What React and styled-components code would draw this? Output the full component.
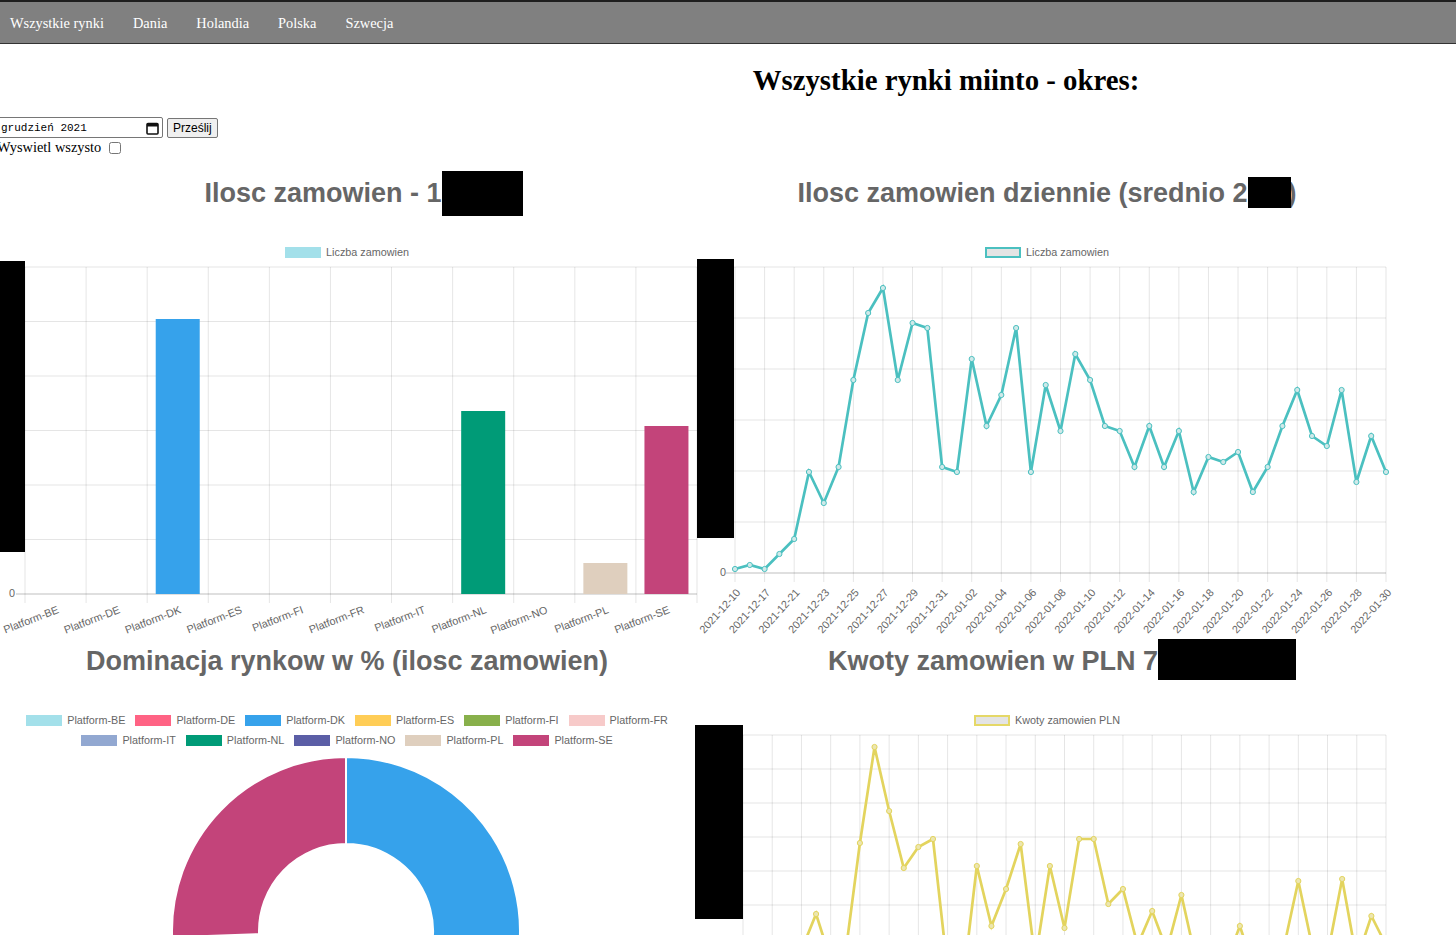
import React from 'react';
import styled, { createGlobalStyle } from 'styled-components';

const GlobalStyle = createGlobalStyle`
  html, body {
    margin: 0;
    padding: 0;
    background: #fff;
    overflow: hidden;
  }
  body {
    font-family: "Liberation Serif", "Times New Roman", serif;
    font-size: 14.4px;
    color: #000;
  }
`;

const platforms = [
    {name: 'Platform-BE', color: '#a3e0ea', value: 0},
    {name: 'Platform-DE', color: '#ff6384', value: 0},
    {name: 'Platform-DK', color: '#36a2eb', value: 275},
    {name: 'Platform-ES', color: '#ffcd56', value: 0},
    {name: 'Platform-FI', color: '#88b04b', value: 0},
    {name: 'Platform-FR', color: '#f7cac9', value: 0},
    {name: 'Platform-IT', color: '#92a8d1', value: 0},
    {name: 'Platform-NL', color: '#009b77', value: 183},
    {name: 'Platform-NO', color: '#5b5ea6', value: 0},
    {name: 'Platform-PL', color: '#dfcfbe', value: 31},
    {name: 'Platform-SE', color: '#c3447a', value: 168},
];

const dayLabels = [
    '2021-12-10', '2021-12-17', '2021-12-21', '2021-12-23', '2021-12-25', '2021-12-27',
    '2021-12-29', '2021-12-31', '2022-01-02', '2022-01-04', '2022-01-06', '2022-01-08',
    '2022-01-10', '2022-01-12', '2022-01-14', '2022-01-16', '2022-01-18', '2022-01-20',
    '2022-01-22', '2022-01-24', '2022-01-26', '2022-01-28', '2022-01-30'
];

// daily orders (svg y, top of svg = 258 on page)
const dailyOrders = [569, 565, 569, 554, 539, 472, 503, 467, 380, 313, 288, 380, 323, 328, 467,
    472, 359, 426, 395, 328, 472, 385, 431, 354, 380, 426, 431, 467, 426, 467, 431, 492, 457, 462,
    452, 492, 467, 426, 390, 436, 446, 390, 482, 436, 472].map(v => v - 258);

// daily amounts (svg y, top of svg = 726 on page)
const dailyAmounts = [1000, 990, 1000, 960, 950, 914, 960, 955, 843, 747, 811, 868, 847, 839, 970,
    990, 866, 926, 889, 844, 960, 866, 928, 839, 839, 904, 889, 945, 911, 950, 895, 960, 955, 965,
    926, 970, 945, 948, 881, 950, 955, 879, 960, 916, 945].map(v => v - 726);

const App = () => {
    return (
        <>
            <GlobalStyle/>
            <Nav>
                <NavLink href="#">Wszystkie rynki</NavLink>
                <NavLink href="#">Dania</NavLink>
                <NavLink href="#">Holandia</NavLink>
                <NavLink href="#">Polska</NavLink>
                <NavLink href="#">Szwecja</NavLink>
            </Nav>
            <Heading>Wszystkie rynki miinto - okres:</Heading>
            <Form onSubmit={e => e.preventDefault()}>
                <InputRow>
                    <MonthField>
                        <span>grudzień 2021</span>
                        <svg width="13" height="14" viewBox="0 0 13 14">
                            <rect x="1" y="2.5" width="11" height="10.5" rx="1" fill="none" stroke="#111" strokeWidth="1.6"/>
                            <rect x="1" y="2.5" width="11" height="3" fill="#111"/>
                        </svg>
                    </MonthField>
                    <SubmitButton type="submit">Prześlij</SubmitButton>
                </InputRow>
                <CheckRow>
                    Wyswietl wszysto
                    <Check type="checkbox"/>
                </CheckRow>
            </Form>

            <ChartRow $top={9}>
                <ChartBox>
                    <Title>
                        Ilosc zamowien - 1
                        <Hidden $w={48}><Redact $top={6} $bw={81} $bh={45}/></Hidden>
                    </Title>
                    <Legend>
                        <LegendItem><Swatch $fill="#a3e0ea"/>Liczba zamowien</LegendItem>
                    </Legend>
                    <BarChart/>
                </ChartBox>
                <ChartBox>
                    <Title>
                        Ilosc zamowien dziennie (srednio 2
                        <Hidden $w={40}><Redact $top={12} $bw={43} $bh={31}/></Hidden>
                        )
                    </Title>
                    <Legend>
                        <LegendItem><Swatch $fill="#e4e4e4" $border="#4bc0c0"/>Liczba zamowien</LegendItem>
                    </Legend>
                    <LineChart
                        height={375}
                        left={38}
                        right={689}
                        rowStep={51}
                        rows={6}
                        zero
                        data={dailyOrders}
                        color="#4bc0c0"
                        pointFill="#cfe9e9"
                        labels={dayLabels}
                        redact={{x: 0, y: 1, w: 37, h: 279}}
                    />
                </ChartBox>
            </ChartRow>

            <ChartRow $top={0}>
                <ChartBox>
                    <Title>Dominacja rynkow w % (ilosc zamowien)</Title>
                    <Legend>
                        {platforms.map(p => (
                            <LegendItem key={p.name}><Swatch $fill={p.color}/>{p.name}</LegendItem>
                        ))}
                    </Legend>
                    <Doughnut/>
                </ChartBox>
                <ChartBox>
                    <Title>
                        Kwoty zamowien w PLN 7
                        <Hidden $w={108}><Redact $top={6} $bw={138} $bh={41}/></Hidden>
                    </Title>
                    <Legend>
                        <LegendItem><Swatch $fill="#e4e4e4" $border="#e5d867"/>Kwoty zamowien PLN</LegendItem>
                    </Legend>
                    <LineChart
                        height={330}
                        left={46}
                        right={689}
                        rowStep={34}
                        rows={9}
                        data={dailyAmounts}
                        color="#e3d45e"
                        pointFill="#ece6b0"
                        redact={{x: -2, y: -1, w: 48, h: 194}}
                    />
                </ChartBox>
            </ChartRow>
        </>
    );
};

const BarChart = () => {
    const left = 28, right = 700, top = 9, bottom = 336;
    const step = (right - left) / platforms.length;
    const rowStep = (bottom - top) / 6;
    return (
        <Plot width={700} height={375}>
            {platforms.map((p, k) => (
                <line key={`v${k}`} x1={left + step * k} x2={left + step * k} y1={top} y2={bottom + 9} stroke="rgba(0,0,0,0.1)"/>
            ))}
            <line x1={right} x2={right} y1={top} y2={bottom + 9} stroke="rgba(0,0,0,0.1)"/>
            {[0, 1, 2, 3, 4, 5, 6].map(k => (
                <line key={`h${k}`} x1={19} x2={right} y1={top + rowStep * k} y2={top + rowStep * k}
                      stroke={k === 6 ? 'rgba(0,0,0,0.25)' : 'rgba(0,0,0,0.1)'}/>
            ))}
            {platforms.map((p, k) => p.value > 0 && (
                <rect key={p.name} x={left + step * (k + 0.5) - 22} y={bottom - p.value} width={44} height={p.value} fill={p.color}/>
            ))}
            <rect x={0} y={3} width={28} height={291} fill="#000"/>
            <text x={18} y={bottom} textAnchor="end" dominantBaseline="middle">0</text>
            {platforms.map((p, k) => (
                <text key={`l${k}`} textAnchor="end" dominantBaseline="middle"
                      transform={`translate(${left + step * (k + 0.5) + 3} ${bottom + 16}) rotate(-21)`}>
                    {p.name}
                </text>
            ))}
        </Plot>
    );
};

const LineChart = ({height, left, right, rowStep, rows, zero, data, color, pointFill, labels, redact}) => {
    const top = 9;
    const bottom = top + rowStep * rows;
    const cols = 22;
    const colStep = (right - left) / cols;
    const ptStep = (right - left) / (data.length - 1);
    const points = data.map((y, i) => `${left + ptStep * i},${y}`).join(' ');
    return (
        <Plot width={700} height={height}>
            {Array.from({length: cols + 1}, (_, k) => (
                <line key={`v${k}`} x1={left + colStep * k} x2={left + colStep * k} y1={top}
                      y2={zero ? bottom + 9 : height} stroke="rgba(0,0,0,0.1)"/>
            ))}
            {Array.from({length: rows + 1}, (_, k) => (
                <line key={`h${k}`} x1={left - 9} x2={right} y1={top + rowStep * k} y2={top + rowStep * k}
                      stroke={zero && k === rows ? 'rgba(0,0,0,0.25)' : 'rgba(0,0,0,0.1)'}/>
            ))}
            <polyline points={points} fill="none" stroke={color} strokeWidth={2.7} strokeLinejoin="miter"/>
            {data.map((y, i) => (
                <circle key={`p${i}`} cx={left + ptStep * i} cy={y} r={2.6} fill={pointFill} stroke={color} strokeWidth={1}/>
            ))}
            <rect x={redact.x} y={redact.y} width={redact.w} height={redact.h} fill="#000"/>
            {zero && <text x={left - 9} y={bottom} textAnchor="end" dominantBaseline="middle">0</text>}
            {labels && labels.map((l, k) => (
                <text key={l} textAnchor="end" dominantBaseline="middle"
                      transform={`translate(${left + colStep * k + 4} ${bottom + 18}) rotate(-48)`}>
                    {l}
                </text>
            ))}
        </Plot>
    );
};

const arcPath = (cx, cy, r0, r1, a0, a1) => {
    const pt = (r, a) => `${cx + r * Math.cos(a)} ${cy + r * Math.sin(a)}`;
    const large = a1 - a0 > Math.PI ? 1 : 0;
    return `M ${pt(r1, a0)} A ${r1} ${r1} 0 ${large} 1 ${pt(r1, a1)} L ${pt(r0, a1)} A ${r0} ${r0} 0 ${large} 0 ${pt(r0, a0)} Z`;
};

const Doughnut = () => {
    const total = platforms.reduce((s, p) => s + p.value, 0);
    let angle = -Math.PI / 2;
    const slices = platforms.filter(p => p.value > 0).map(p => {
        const a0 = angle;
        angle += (p.value / total) * Math.PI * 2;
        return {...p, a0, a1: angle};
    });
    return (
        <Plot width={700} height={380}>
            {slices.map(s => (
                <path key={s.name} d={arcPath(349, 185, 87, 174, s.a0, s.a1)} fill={s.color} stroke="#fff" strokeWidth={2}/>
            ))}
        </Plot>
    );
};

export default App;

const Nav = styled.nav`
display: flex;
align-items: center;
gap: 29px;
box-sizing: border-box;
height: 41px;
padding: 2px 0 0 10px;
background: #808080;
border-top: 2px solid #1e1e1e;
border-bottom: 1px solid #333;
box-sizing: content-box;
height: 39px;
`;
const NavLink = styled.a`
color: #fff;
text-decoration: none;
font-size: 14.4px;
`;
const Heading = styled.h1`
margin: 20px 0 20px;
padding-left: 436px;
text-align: center;
font-size: 28.8px;
line-height: 33px;
font-weight: bold;
`;
const Form = styled.form`
display: flex;
flex-direction: column;
align-items: flex-start;
margin-left: -3px;
`;
const InputRow = styled.div`
display: flex;
align-items: center;
gap: 4px;
height: 21px;
`;
const MonthField = styled.div`
box-sizing: border-box;
width: 166px;
height: 21px;
display: flex;
align-items: center;
justify-content: space-between;
padding: 0 3px 0 3px;
border: 1px solid #767676;
border-radius: 2px;
font: 11px "Liberation Mono", "Courier New", monospace;
color: #000;
`;
const SubmitButton = styled.button`
box-sizing: border-box;
height: 20px;
padding: 0 5px;
border: 1px solid #767676;
border-radius: 2px;
background: #efefef;
font: 12px "Liberation Sans", Arial, sans-serif;
color: #000;
`;
const CheckRow = styled.label`
display: flex;
align-items: center;
height: 17px;
margin-top: 1px;
font-size: 14.4px;
`;
const Check = styled.input`
width: 12px;
height: 12px;
margin: 0 0 0 8px;
`;
const ChartRow = styled.div`
display: grid;
grid-template-columns: 700px 700px;
margin-top: ${p => p.$top}px;
margin-left: -3px;
`;
const ChartBox = styled.div`
width: 700px;
`;
const Title = styled.div`
height: 56px;
text-align: center;
white-space: nowrap;
font: bold 27px/56px "Liberation Sans", Arial, sans-serif;
color: #666;
`;
const Hidden = styled.span`
position: relative;
display: inline-block;
width: ${p => p.$w}px;
height: 56px;
vertical-align: top;
`;
const Redact = styled.span`
position: absolute;
left: 0;
top: ${p => p.$top}px;
width: ${p => p.$bw}px;
height: ${p => p.$bh}px;
background: #000;
`;
const Legend = styled.div`
display: flex;
flex-wrap: wrap;
justify-content: center;
column-gap: 10px;
row-gap: 8px;
padding-top: 25px;
font: 10.8px/12px "Liberation Sans", Arial, sans-serif;
color: #666;
`;
const LegendItem = styled.div`
display: flex;
align-items: center;
gap: 5px;
height: 12px;
white-space: nowrap;
`;
const Swatch = styled.span`
box-sizing: border-box;
width: 36px;
height: 11px;
background: ${p => p.$fill};
border: ${p => p.$border ? `2.5px solid ${p.$border}` : 'none'};
`;
const Plot = styled.svg`
display: block;
overflow: visible;
text {
font: 10.8px "Liberation Sans", Arial, sans-serif;
fill: #666;
}
`;
